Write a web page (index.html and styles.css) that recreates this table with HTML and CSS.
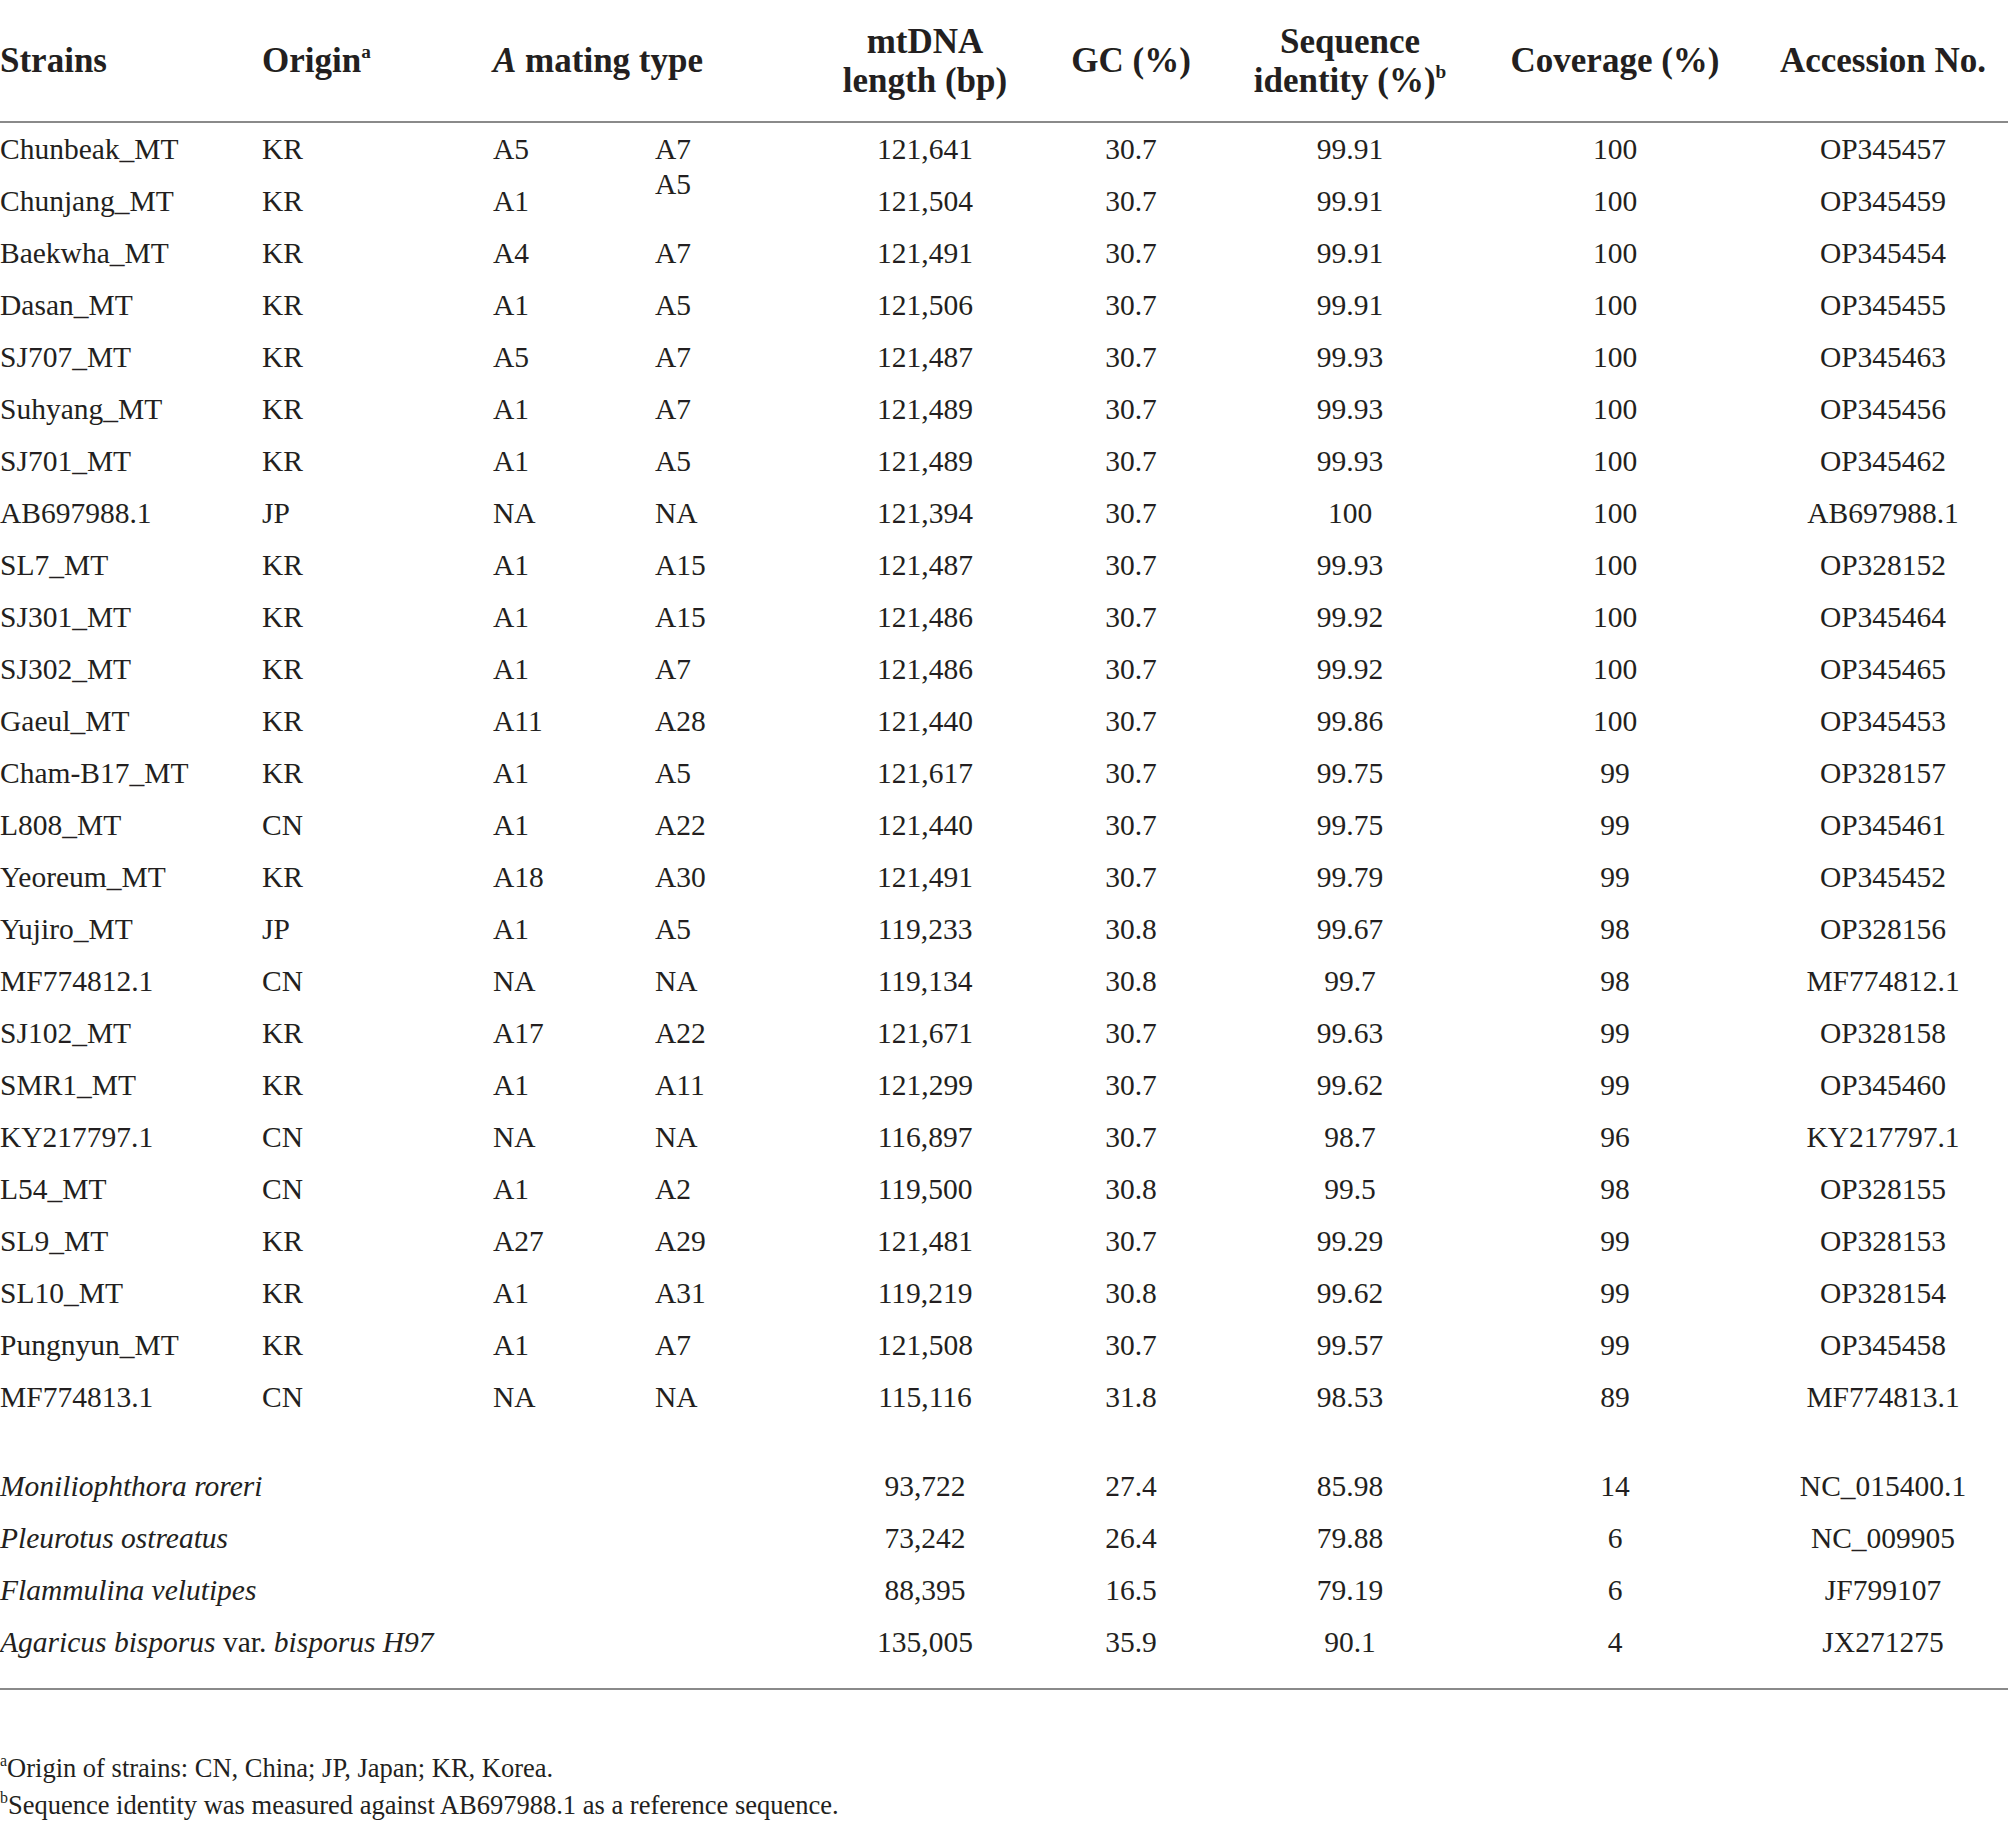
FILE: index.html
```html
<!DOCTYPE html>
<html lang="en">
<head>
<meta charset="utf-8">
<title>Mitochondrial genome characteristics of strains</title>
<link rel="stylesheet" href="styles.css">
</head>
<body>
<div class="page">
<table class="data">
  <colgroup>
    <col class="c-strain"><col class="c-origin"><col class="c-a1"><col class="c-a2"><col class="c-len"><col class="c-gc"><col class="c-seq"><col class="c-cov"><col class="c-acc">
  </colgroup>
  <thead>
    <tr>
      <th class="l">Strains</th>
      <th class="l">Origin<sup>a</sup></th>
      <th class="l" colspan="2"><i>A</i> mating type</th>
      <th>mtDNA<br>length (bp)</th>
      <th>GC (%)</th>
      <th>Sequence<br>identity (%)<sup>b</sup></th>
      <th>Coverage (%)</th>
      <th>Accession No.</th>
    </tr>
  </thead>
  <tbody>
    <tr><td class="l">Chunbeak_MT</td><td class="l">KR</td><td class="l">A5</td><td class="l">A7</td><td>121,641</td><td>30.7</td><td>99.91</td><td>100</td><td>OP345457</td></tr>
    <tr><td class="l">Chunjang_MT</td><td class="l">KR</td><td class="l">A1</td><td class="l"><span class="raised">A5</span></td><td>121,504</td><td>30.7</td><td>99.91</td><td>100</td><td>OP345459</td></tr>
    <tr><td class="l">Baekwha_MT</td><td class="l">KR</td><td class="l">A4</td><td class="l">A7</td><td>121,491</td><td>30.7</td><td>99.91</td><td>100</td><td>OP345454</td></tr>
    <tr><td class="l">Dasan_MT</td><td class="l">KR</td><td class="l">A1</td><td class="l">A5</td><td>121,506</td><td>30.7</td><td>99.91</td><td>100</td><td>OP345455</td></tr>
    <tr><td class="l">SJ707_MT</td><td class="l">KR</td><td class="l">A5</td><td class="l">A7</td><td>121,487</td><td>30.7</td><td>99.93</td><td>100</td><td>OP345463</td></tr>
    <tr><td class="l">Suhyang_MT</td><td class="l">KR</td><td class="l">A1</td><td class="l">A7</td><td>121,489</td><td>30.7</td><td>99.93</td><td>100</td><td>OP345456</td></tr>
    <tr><td class="l">SJ701_MT</td><td class="l">KR</td><td class="l">A1</td><td class="l">A5</td><td>121,489</td><td>30.7</td><td>99.93</td><td>100</td><td>OP345462</td></tr>
    <tr><td class="l">AB697988.1</td><td class="l">JP</td><td class="l">NA</td><td class="l">NA</td><td>121,394</td><td>30.7</td><td>100</td><td>100</td><td>AB697988.1</td></tr>
    <tr><td class="l">SL7_MT</td><td class="l">KR</td><td class="l">A1</td><td class="l">A15</td><td>121,487</td><td>30.7</td><td>99.93</td><td>100</td><td>OP328152</td></tr>
    <tr><td class="l">SJ301_MT</td><td class="l">KR</td><td class="l">A1</td><td class="l">A15</td><td>121,486</td><td>30.7</td><td>99.92</td><td>100</td><td>OP345464</td></tr>
    <tr><td class="l">SJ302_MT</td><td class="l">KR</td><td class="l">A1</td><td class="l">A7</td><td>121,486</td><td>30.7</td><td>99.92</td><td>100</td><td>OP345465</td></tr>
    <tr><td class="l">Gaeul_MT</td><td class="l">KR</td><td class="l">A11</td><td class="l">A28</td><td>121,440</td><td>30.7</td><td>99.86</td><td>100</td><td>OP345453</td></tr>
    <tr><td class="l">Cham-B17_MT</td><td class="l">KR</td><td class="l">A1</td><td class="l">A5</td><td>121,617</td><td>30.7</td><td>99.75</td><td>99</td><td>OP328157</td></tr>
    <tr><td class="l">L808_MT</td><td class="l">CN</td><td class="l">A1</td><td class="l">A22</td><td>121,440</td><td>30.7</td><td>99.75</td><td>99</td><td>OP345461</td></tr>
    <tr><td class="l">Yeoreum_MT</td><td class="l">KR</td><td class="l">A18</td><td class="l">A30</td><td>121,491</td><td>30.7</td><td>99.79</td><td>99</td><td>OP345452</td></tr>
    <tr><td class="l">Yujiro_MT</td><td class="l">JP</td><td class="l">A1</td><td class="l">A5</td><td>119,233</td><td>30.8</td><td>99.67</td><td>98</td><td>OP328156</td></tr>
    <tr><td class="l">MF774812.1</td><td class="l">CN</td><td class="l">NA</td><td class="l">NA</td><td>119,134</td><td>30.8</td><td>99.7</td><td>98</td><td>MF774812.1</td></tr>
    <tr><td class="l">SJ102_MT</td><td class="l">KR</td><td class="l">A17</td><td class="l">A22</td><td>121,671</td><td>30.7</td><td>99.63</td><td>99</td><td>OP328158</td></tr>
    <tr><td class="l">SMR1_MT</td><td class="l">KR</td><td class="l">A1</td><td class="l">A11</td><td>121,299</td><td>30.7</td><td>99.62</td><td>99</td><td>OP345460</td></tr>
    <tr><td class="l">KY217797.1</td><td class="l">CN</td><td class="l">NA</td><td class="l">NA</td><td>116,897</td><td>30.7</td><td>98.7</td><td>96</td><td>KY217797.1</td></tr>
    <tr><td class="l">L54_MT</td><td class="l">CN</td><td class="l">A1</td><td class="l">A2</td><td>119,500</td><td>30.8</td><td>99.5</td><td>98</td><td>OP328155</td></tr>
    <tr><td class="l">SL9_MT</td><td class="l">KR</td><td class="l">A27</td><td class="l">A29</td><td>121,481</td><td>30.7</td><td>99.29</td><td>99</td><td>OP328153</td></tr>
    <tr><td class="l">SL10_MT</td><td class="l">KR</td><td class="l">A1</td><td class="l">A31</td><td>119,219</td><td>30.8</td><td>99.62</td><td>99</td><td>OP328154</td></tr>
    <tr><td class="l">Pungnyun_MT</td><td class="l">KR</td><td class="l">A1</td><td class="l">A7</td><td>121,508</td><td>30.7</td><td>99.57</td><td>99</td><td>OP345458</td></tr>
    <tr><td class="l">MF774813.1</td><td class="l">CN</td><td class="l">NA</td><td class="l">NA</td><td>115,116</td><td>31.8</td><td>98.53</td><td>89</td><td>MF774813.1</td></tr>
    <tr class="spacer"><td colspan="9"></td></tr>
    <tr><td class="l sp" colspan="4"><i>Moniliophthora roreri</i></td><td>93,722</td><td>27.4</td><td>85.98</td><td>14</td><td>NC_015400.1</td></tr>
    <tr><td class="l sp" colspan="4"><i>Pleurotus ostreatus</i></td><td>73,242</td><td>26.4</td><td>79.88</td><td>6</td><td>NC_009905</td></tr>
    <tr><td class="l sp" colspan="4"><i>Flammulina velutipes</i></td><td>88,395</td><td>16.5</td><td>79.19</td><td>6</td><td>JF799107</td></tr>
    <tr><td class="l sp" colspan="4"><i>Agaricus bisporus</i> var. <i>bisporus H97</i></td><td>135,005</td><td>35.9</td><td>90.1</td><td>4</td><td>JX271275</td></tr>
    <tr class="end"><td colspan="9"></td></tr>
  </tbody>
</table>
<div class="notes">
  <p><sup>a</sup>Origin of strains: CN, China; JP, Japan; KR, Korea.</p>
  <p><sup>b</sup>Sequence identity was measured against AB697988.1 as a reference sequence.</p>
</div>
</div>
</body>
</html>
```
FILE: styles.css
```css
html, body {
  margin: 0;
  padding: 0;
  background: #ffffff;
}

body {
  font-family: "Liberation Serif", "Times New Roman", serif;
  color: #231f20;
}

.page {
  width: 2008px;
}

.data {
  width: 2008px;
  border-collapse: collapse;
  table-layout: fixed;
  font-size: 29.5px;
}

.c-strain { width: 262px; }
.c-origin { width: 231px; }
.c-a1 { width: 162px; }
.c-a2 { width: 165px; }
.c-len { width: 210px; }
.c-gc { width: 202px; }
.c-seq { width: 236px; }
.c-cov { width: 294px; }
.c-acc { width: 246px; }

.data th,
.data td {
  padding: 0;
  text-align: center;
  vertical-align: middle;
  white-space: nowrap;
  font-weight: normal;
}

.data th.l,
.data td.l {
  text-align: left;
}

.data thead th {
  height: 121px;
  font-size: 35px;
  font-weight: bold;
  line-height: 39px;
  border-bottom: 2px solid #8a8a8a;
}

.data thead th:last-child {
  padding-right: 4px;
}

.data tbody td {
  height: 52px;
  line-height: 52px;
}

.data tbody td:last-child {
  padding-right: 4px;
}

.data sup {
  font-size: 0.55em;
  line-height: 0;
  vertical-align: 0.75em;
  font-weight: bold;
}

.raised {
  position: relative;
  top: -17px;
}

.data tbody tr.spacer td {
  height: 37px;
  line-height: 0;
}

.data tbody tr.end td {
  height: 20px;
  line-height: 0;
  border-bottom: 2px solid #8a8a8a;
}

.notes {
  margin-top: 60px;
  font-size: 26.5px;
  line-height: 37px;
}

.notes p {
  margin: 0;
}

.notes sup {
  font-size: 0.6em;
  line-height: 0;
  vertical-align: 0.7em;
}
```
